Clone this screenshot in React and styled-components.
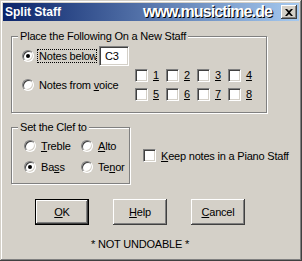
import styled, { createGlobalStyle } from "styled-components";

const Global = createGlobalStyle`
  html, body { margin: 0; padding: 0; background: #d4d0c8; }
  body { font-family: "Liberation Sans", Arial, sans-serif; font-size: 11px; letter-spacing: -0.2px; color: #000; }
`;

const Window = styled.div`
  width: 302px;
  height: 261px;
  box-sizing: border-box;
  padding: 3px;
  background: #d4d0c8;
  box-shadow: inset -1px -1px #404040, inset 1px 1px #d4d0c8,
    inset -2px -2px #808080, inset 2px 2px #ffffff;
  display: flex;
  flex-direction: column;
`;

const TitleBar = styled.div`
  height: 18px;
  display: flex;
  align-items: center;
  padding-left: 2px;
  background: linear-gradient(to right, #0a246a, #a6caf0);
`;

const Title = styled.span`
  color: #fff;
  font-weight: bold;
  font-size: 12px;
  letter-spacing: 0;
  flex: 1;
`;

const Url = styled.span`
  color: #fff;
  font-weight: bold;
  font-size: 16px;
  letter-spacing: -0.9px;
  text-shadow: 1px 1px 0 #000;
  margin-right: 9px;
`;

const CloseBtn = styled.div`
  width: 16px;
  height: 14px;
  margin-right: 2px;
  background: #d4d0c8;
  box-shadow: inset -1px -1px #404040, inset 1px 1px #fff,
    inset -2px -2px #808080;
  display: flex;
  align-items: center;
  justify-content: center;
`;

const Body = styled.div`
  display: flex;
  flex-direction: column;
  align-items: flex-start;
  padding-left: 8px;
`;

const Group = styled.div`
  position: relative;
  box-sizing: border-box;
  width: ${(p) => p.$w}px;
  height: ${(p) => p.$h}px;
  margin-top: ${(p) => p.$mt}px;
  border: 1px solid #808080;
  box-shadow: inset 1px 1px #fff, 1px 1px #fff;
`;

const Caption = styled.span`
  position: absolute;
  top: -8px;
  left: 6px;
  padding: 0 2px;
  background: #d4d0c8;
  line-height: 14px;
`;

const Line = styled.div`
  display: flex;
  align-items: center;
  height: ${(p) => p.$h}px;
  margin-top: ${(p) => p.$mt}px;
  padding-left: 10px;
`;

const Option = styled.label`
  display: flex;
  align-items: center;
  width: ${(p) => (p.$w ? `${p.$w}px` : "auto")};
  flex-shrink: 0;
`;

const Radio = styled.span`
  width: 12px;
  height: 12px;
  box-sizing: border-box;
  border-radius: 50%;
  flex-shrink: 0;
  background: #fff;
  border: 1px solid;
  border-color: #808080 #fff #fff #808080;
  box-shadow: inset 1px 1px #404040, inset -1px -1px #d4d0c8;
  display: flex;
  align-items: center;
  justify-content: center;
  &::after {
    content: "";
    width: 4px;
    height: 4px;
    border-radius: 50%;
    background: ${(p) => (p.$on ? "#000" : "transparent")};
  }
`;

const Box = styled.span`
  width: 13px;
  height: 13px;
  box-sizing: border-box;
  flex-shrink: 0;
  background: #fff;
  border: 1px solid;
  border-color: #808080 #fff #fff #808080;
  box-shadow: inset 1px 1px #404040, inset -1px -1px #d4d0c8;
`;

const Text = styled.span`
  margin-left: ${(p) => p.$ml ?? 3}px;
  padding: 0 1px;
  line-height: 12px;
  border: 1px dotted ${(p) => (p.$focus ? "#000" : "transparent")};
  white-space: nowrap;
  overflow: hidden;
  ${(p) => p.$w && `width: ${p.$w}px; box-sizing: border-box;`}
`;

const Field = styled.div`
  width: 30px;
  height: 20px;
  box-sizing: border-box;
  margin-left: 2px;
  padding-left: 5px;
  background: #fff;
  border: 1px solid;
  border-color: #808080 #fff #fff #808080;
  box-shadow: inset 1px 1px #404040, inset -1px -1px #d4d0c8;
  line-height: 18px;
`;

const Voices = styled.div`
  display: grid;
  grid-template-columns: repeat(4, 31px);
  row-gap: 5px;
`;

const ClefGrid = styled.div`
  display: grid;
  grid-template-columns: 57px auto;
  grid-auto-rows: 21px;
  padding: 7px 0 0 12px;
  align-items: center;
`;

const Row = styled.div`
  display: flex;
  align-items: center;
  gap: 13px;
  margin-top: 14px;
`;

const Footer = styled.div`
  width: 210px;
  margin: 15px 0 0 24px;
  display: flex;
  flex-direction: column;
  align-items: center;
`;

const Buttons = styled.div`
  display: flex;
  gap: 24px;
`;

const Button = styled.div`
  width: 54px;
  height: 26px;
  box-sizing: border-box;
  display: flex;
  align-items: center;
  justify-content: center;
  background: #d4d0c8;
  border: ${(p) => (p.$default ? "1px solid #000" : "none")};
  box-shadow: inset -1px -1px #404040, inset 1px 1px #fff,
    inset -2px -2px #808080;
`;

const Note = styled.div`
  margin-top: 13px;
  line-height: 13px;
`;

const voices = [1, 2, 3, 4, 5, 6, 7, 8];

export default function App() {
  return (
    <>
      <Global />
      <Window>
        <TitleBar>
          <Title>Split Staff</Title>
          <Url>www.musictime.de</Url>
          <CloseBtn>
            <svg width="8" height="7" viewBox="0 0 8 7">
              <path d="M0 0h2l2 2 2-2h2L5 3.5 8 7H6L4 5 2 7H0l3-3.5z" fill="#000" />
            </svg>
          </CloseBtn>
        </TitleBar>
        <Body>
          <Group $w={256} $h={77} $mt={15}>
            <Caption>Place the Following On a New Staff</Caption>
            <Line $h={19} $mt={9}>
              <Option>
                <Radio $on />
                <Text $focus $w={60}>Notes below</Text>
              </Option>
              <Field>C3</Field>
            </Line>
            <Line $h={31} $mt={4}>
              <Option $w={113}>
                <Radio />
                <Text>
                  Notes from <u>v</u>oice
                </Text>
              </Option>
              <Voices>
                {voices.map((n) => (
                  <Option key={n}>
                    <Box />
                    <Text $ml={3}>
                      <u>{n}</u>
                    </Text>
                  </Option>
                ))}
              </Voices>
            </Line>
          </Group>
          <Row>
            <Group $w={119} $h={57} $mt={0}>
              <Caption>Set the Clef to</Caption>
              <ClefGrid>
                <Option>
                  <Radio />
                  <Text>
                    <u>T</u>reble
                  </Text>
                </Option>
                <Option>
                  <Radio />
                  <Text>
                    <u>A</u>lto
                  </Text>
                </Option>
                <Option>
                  <Radio $on />
                  <Text>
                    Ba<u>s</u>s
                  </Text>
                </Option>
                <Option>
                  <Radio />
                  <Text>
                    Te<u>n</u>or
                  </Text>
                </Option>
              </ClefGrid>
            </Group>
            <Option>
              <Box />
              <Text $ml={3}>
                <u>K</u>eep notes in a Piano Staff
              </Text>
            </Option>
          </Row>
          <Footer>
            <Buttons>
              <Button $default>
                <span>
                  <u>O</u>K
                </span>
              </Button>
              <Button>
                <span>
                  <u>H</u>elp
                </span>
              </Button>
              <Button>
                <span>
                  <u>C</u>ancel
                </span>
              </Button>
            </Buttons>
            <Note>* NOT UNDOABLE *</Note>
          </Footer>
        </Body>
      </Window>
    </>
  );
}
